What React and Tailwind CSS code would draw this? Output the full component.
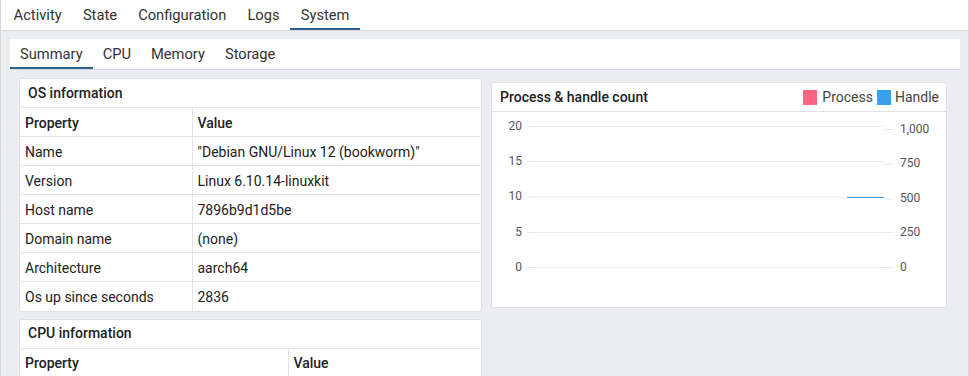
const topTabs = ["Activity", "State", "Configuration", "Logs", "System"];
const subTabs = ["Summary", "CPU", "Memory", "Storage"];

const osRows = [
  ["Name", "\"Debian GNU/Linux 12 (bookworm)\""],
  ["Version", "Linux 6.10.14-linuxkit"],
  ["Host name", "7896b9d1d5be"],
  ["Domain name", "(none)"],
  ["Architecture", "aarch64"],
  ["Os up since seconds", "2836"],
];

const leftTicks = [
  { label: "20", y: 14.5 },
  { label: "15", y: 49.5 },
  { label: "10", y: 85 },
  { label: "5", y: 120.5 },
  { label: "0", y: 155.5 },
];

const rightTicks = [
  { label: "1,000", y: 17.5 },
  { label: "750", y: 52 },
  { label: "500", y: 87 },
  { label: "250", y: 120.5 },
  { label: "0", y: 155.5 },
];

function InfoTable({ rows, firstCol }) {
  return (
    <table className="w-full border-collapse text-[14px] text-[#222]">
      <tbody>
        <tr className="h-[29px]">
          <td className={`${firstCol} border-t border-r border-[#e2e3e7] pl-[5px] pt-[2px] font-medium`}>Property</td>
          <td className="border-t border-[#e2e3e7] pl-[5px] pt-[2px] font-medium">Value</td>
        </tr>
        {rows.map(([k, v]) => (
          <tr key={k} className="h-[29px]">
            <td className="border-t border-r border-[#e2e3e7] pl-[5px] pt-[2px]">{k}</td>
            <td className="border-t border-[#e2e3e7] pl-[5px] pt-[2px]">{v}</td>
          </tr>
        ))}
      </tbody>
    </table>
  );
}

function ChartCard() {
  return (
    <div className="w-[456px] h-[226px] mt-[12px] bg-white border border-[#dfe0e4] rounded-[3px] flex flex-col">
      <div className="h-[29px] shrink-0 flex items-center justify-between pl-[8px] pr-[7px] pt-[1px] border-b border-[#dfe0e4]">
        <span className="text-[14px] font-medium text-[#222]">Process &amp; handle count</span>
        <div className="flex items-center text-[14px] text-[#444]">
          <span className="w-[14px] h-[15px] bg-[#ff6384] mr-[5px]" />
          <span className="mr-[4px]">Process</span>
          <span className="w-[14px] h-[15px] bg-[#36a2eb] mr-[4px]" />
          <span>Handle</span>
        </div>
      </div>
      <svg width="454" height="195" className="block">
        {leftTicks.map((t) => (
          <g key={"l" + t.label}>
            <line x1="35" x2="45" y1={t.y} y2={t.y} stroke="#e6e6e6" strokeWidth="1" />
            <line x1="45" x2="392" y1={t.y} y2={t.y} stroke="#ececec" strokeWidth="1" />
            <text x="30" y={t.y} textAnchor="end" dominantBaseline="middle" fontSize="12" fill="#555">
              {t.label}
            </text>
          </g>
        ))}
        {rightTicks.map((t) => (
          <g key={"r" + t.label}>
            <line x1="392" x2="401" y1={t.y} y2={t.y} stroke="#e6e6e6" strokeWidth="1" />
            <text x="408" y={t.y} dominantBaseline="middle" fontSize="12" fill="#555">
              {t.label}
            </text>
          </g>
        ))}
        <line x1="355" x2="392" y1="85.5" y2="85.5" stroke="#36a2eb" strokeWidth="1" />
      </svg>
    </div>
  );
}

export default function App() {
  return (
    <div
      className="w-[969px] h-[376px] overflow-hidden bg-[#ecedf1] border-l border-r border-[#d6d7dc] text-[#222]"
      style={{ fontFamily: "Roboto, 'Liberation Sans', sans-serif" }}
    >
      <div className="h-[31px] bg-white border-b border-[#d9dae0] flex pl-[2px]">
        {topTabs.map((t) => (
          <div
            key={t}
            className={`px-[10.6px] h-[30px] pt-[2px] flex items-center text-[14.7px] text-[#333] border-b-2 ${
              t === "System" ? "border-[#2d6190]" : "border-transparent"
            }`}
          >
            {t}
          </div>
        ))}
      </div>

      <div className="pl-[9px] pt-[8px]">
        <div className="w-[950px] h-[31px] bg-white border-b border-[#d9dae0] flex">
          {subTabs.map((t) => (
            <div
              key={t}
              className={`px-[10px] h-[30px] pt-[3px] flex items-center text-[14.7px] text-[#333] border-b-2 ${
                t === "Summary" ? "border-[#2d6190]" : "border-transparent"
              }`}
            >
              {t}
            </div>
          ))}
        </div>

        <div className="flex items-start pl-[9px] gap-[9px]">
          <div className="w-[463px] flex flex-col gap-[7px] mt-[8px]">
            <div className="bg-white border border-[#dfe0e4] rounded-[3px] overflow-hidden pr-[1px]">
              <div className="h-[28px] flex items-center pl-[8px] text-[14px] font-medium">OS information</div>
              <InfoTable rows={osRows} firstCol="w-[172px]" />
            </div>
            <div className="bg-white border border-[#dfe0e4] rounded-[3px] overflow-hidden pr-[1px]">
              <div className="h-[28px] flex items-center pl-[8px] text-[14px] font-medium">CPU information</div>
              <InfoTable rows={[]} firstCol="w-[268px]" />
            </div>
          </div>
          <ChartCard />
        </div>
      </div>
    </div>
  );
}
